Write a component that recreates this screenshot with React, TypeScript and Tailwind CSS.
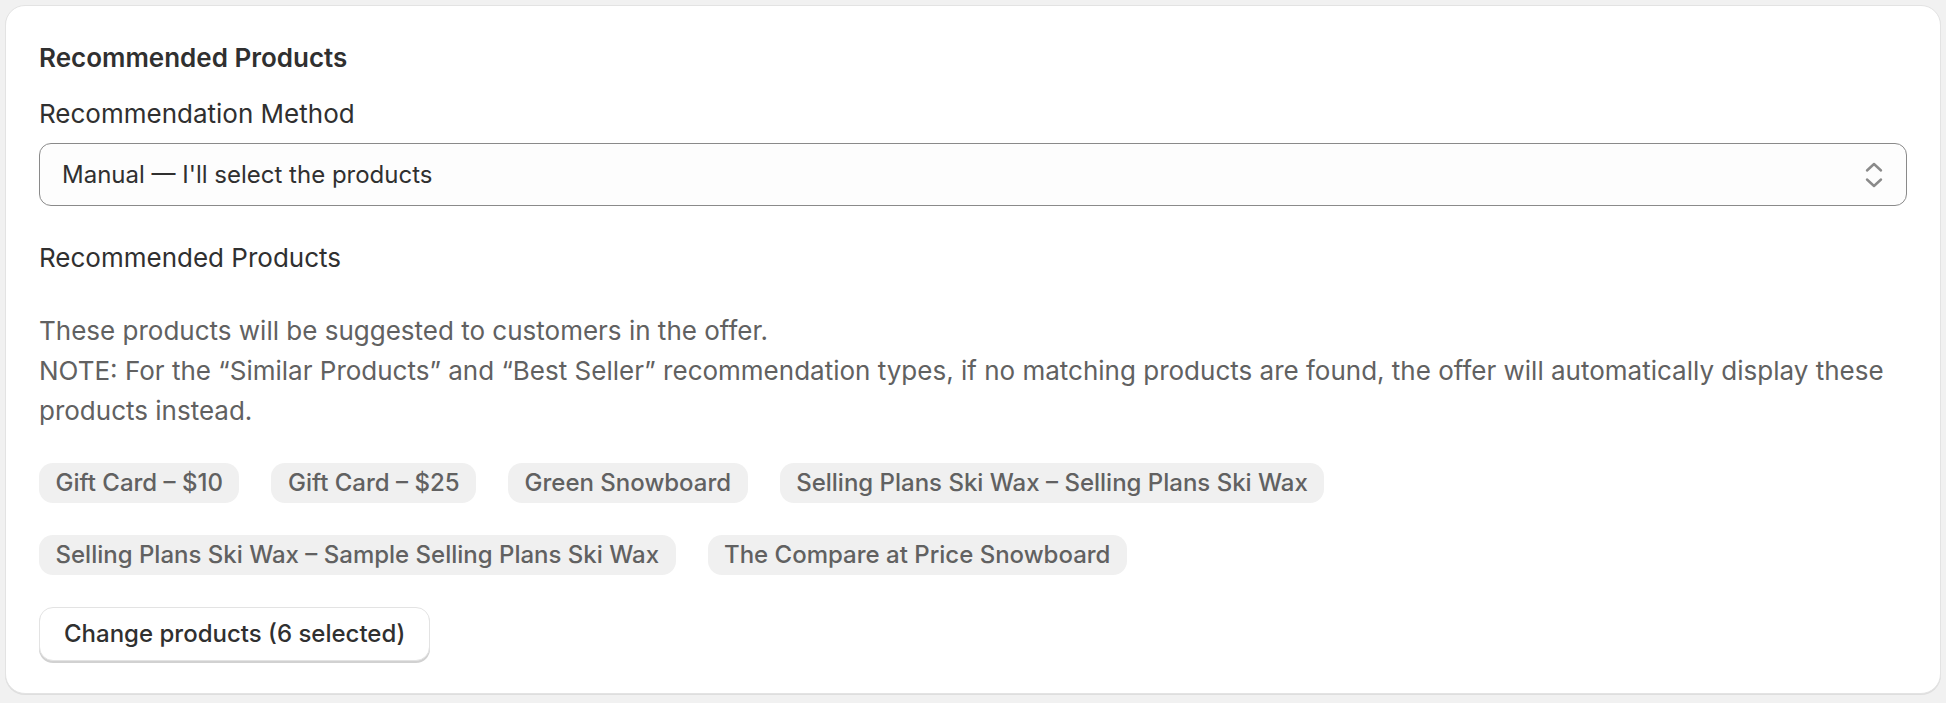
import React from 'react';

const products = [
  'Gift Card – $10',
  'Gift Card – $25',
  'Green Snowboard',
  'Selling Plans Ski Wax – Selling Plans Ski Wax',
  'Selling Plans Ski Wax – Sample Selling Plans Ski Wax',
  'The Compare at Price Snowboard',
];

function SelectIcon() {
  return (
    <svg width="20" height="28" viewBox="0 0 20 28" fill="none" className="text-[#8a8a8a]">
      <path d="M3 9.5 L10 3 L17 9.5" stroke="currentColor" strokeWidth="2.4" strokeLinecap="round" strokeLinejoin="round" />
      <path d="M3 18.5 L10 25 L17 18.5" stroke="currentColor" strokeWidth="2.4" strokeLinecap="round" strokeLinejoin="round" />
    </svg>
  );
}

export default function App() {
  return (
    <div
      className="min-h-screen bg-[#f1f1f1] p-[5px] text-[26px] leading-[40px] text-[#303030]"
      style={{ fontFamily: 'Inter, "Noto Sans", sans-serif' }}
    >
      <div className="rounded-[20px] border border-[#e3e3e3] bg-white px-[33px] pt-[32px] pb-[32px] shadow-[0_1px_0_rgba(0,0,0,0.08)]">
        <h2 className="font-semibold">Recommended Products</h2>

        {/* Method select */}
        <div className="mt-4">
          <label className="block">Recommendation Method</label>
          <div className="mt-[9px] flex h-[63px] items-center justify-between rounded-[12px] border border-[#8a8a8a] bg-[#fdfdfd] pl-[22px] pr-[22px] text-[24px]">
            <span>Manual — I'll select the products</span>
            <SelectIcon />
          </div>
        </div>

        <div className="mt-8">Recommended Products</div>

        <p className="mt-[33px] text-[#616161]">
          These products will be suggested to customers in the offer.
          <br />
          NOTE: For the “Similar Products” and “Best Seller” recommendation types, if no matching products are found, the offer will automatically display these products instead.
        </p>

        <div className="mt-8 flex flex-wrap gap-8 text-[24px]">
          {products.map((p) => (
            <span
              key={p}
              className="inline-flex h-[40px] items-center rounded-[14px] bg-[#f0f0f0] px-[16.5px] font-medium text-[#616161]"
            >
              {p}
            </span>
          ))}
        </div>

        <button className="mt-8 flex h-[54px] items-center rounded-[14px] border border-[#e3e3e3] bg-white px-[24px] text-[24px] font-[550] text-[#303030] shadow-[0_2px_0_rgba(0,0,0,0.18)]">
          Change products (6 selected)
        </button>
      </div>
    </div>
  );
}
